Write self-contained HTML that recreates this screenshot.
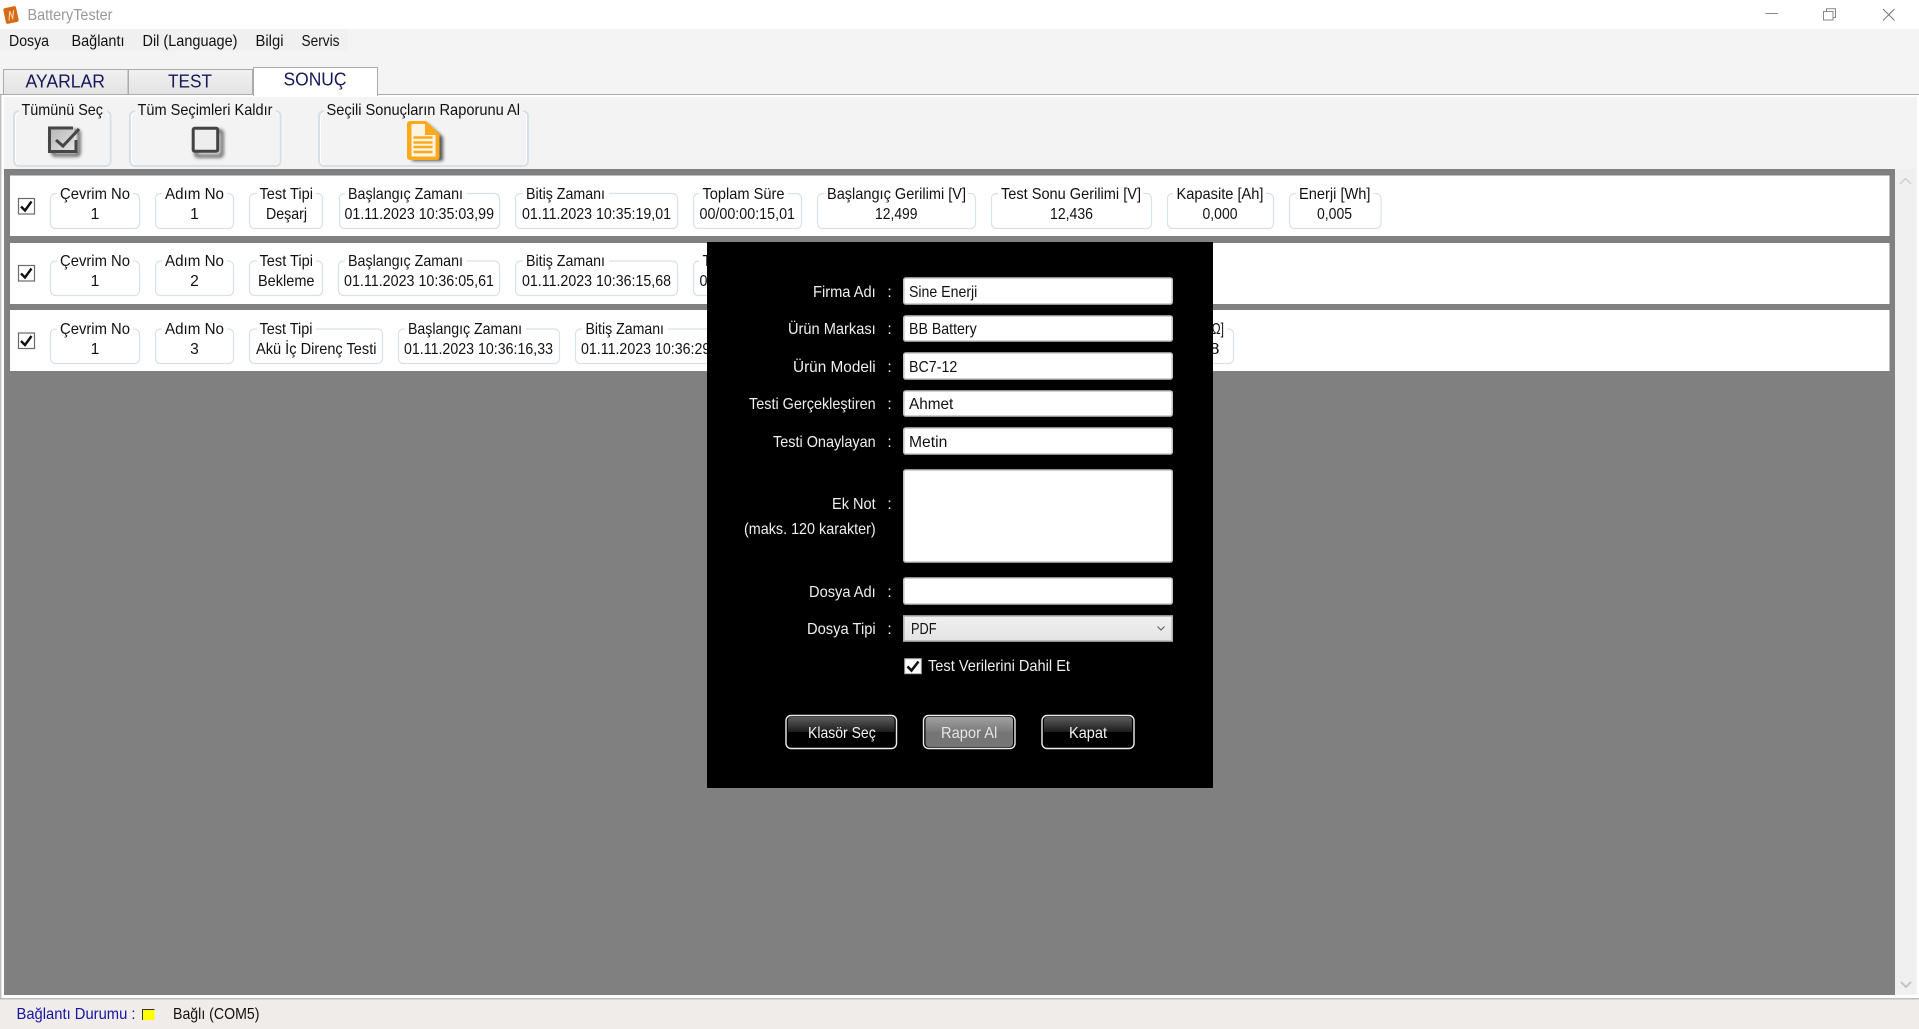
<!DOCTYPE html>
<html lang="tr"><head><meta charset="utf-8"><title>BatteryTester</title>
<style>
html,body{margin:0;padding:0;width:1919px;height:1029px;overflow:hidden;background:#fff}
svg{display:block}
text{font-family:"Liberation Sans",sans-serif;font-size:15.6px;fill:#111}
.d{fill:#f0f0f0}
.c{text-anchor:middle}
.g{fill:none;stroke:#d8e2e9;stroke-width:1.2}
.tab{font-size:18px;fill:#14185a}
.btn{fill:#f2f2f2}
</style></head><body>
<svg width="1919" height="1029" viewBox="0 0 1919 1029" xmlns="http://www.w3.org/2000/svg">
<defs>
<linearGradient id="tabg" x1="0" y1="0" x2="0" y2="1"><stop offset="0" stop-color="#f1f1f1"/><stop offset="1" stop-color="#e3e3e3"/></linearGradient>
<linearGradient id="btop" x1="0" y1="0" x2="0" y2="1"><stop offset="0" stop-color="#5c5c5c"/><stop offset="1" stop-color="#1c1c1c"/></linearGradient>
<linearGradient id="btopg" x1="0" y1="0" x2="0" y2="1"><stop offset="0" stop-color="#a0a0a0"/><stop offset="1" stop-color="#7a7a7a"/></linearGradient>
<linearGradient id="cmb" x1="0" y1="0" x2="0" y2="1"><stop offset="0" stop-color="#f0f0f0"/><stop offset="1" stop-color="#e4e4e4"/></linearGradient>
<linearGradient id="chk" x1="0" y1="0" x2="1" y2="1"><stop offset="0" stop-color="#b5b5b5"/><stop offset="1" stop-color="#e4e4e4"/></linearGradient>
<filter id="sh" x="-30%" y="-30%" width="170%" height="170%"><feGaussianBlur stdDeviation="1.5"/></filter>
</defs>

<!-- window chrome -->
<rect width="1919" height="1029" fill="#fff"/>
<rect y="29" width="1919" height="65" fill="#f4f4f4"/>
<rect y="29" width="348" height="22" fill="#f0f0f0"/>
<g transform="rotate(-12 11 15)"><rect x="4.5" y="7" width="13" height="16" rx="2" fill="#d96a14"/><path d="M8 20 L10.5 11 L12 18.5 L14.5 11" fill="none" stroke="#f7d5b8" stroke-width="1.1"/></g>
<text x="27.5" y="20" style="fill:#999" textLength="85" lengthAdjust="spacingAndGlyphs">BatteryTester</text>
<path d="M1765.5 13.5H1778" stroke="#888" stroke-width="1"/>
<path d="M1823.5 11.5H1833V20H1823.5ZM1826.5 11.5V8.8H1835.5V17.5H1833" fill="none" stroke="#888" stroke-width="1"/>
<path d="M1883 9L1894.5 20.5M1894.5 9L1883 20.5" stroke="#777" stroke-width="1"/>

<text x="9" y="46" textLength="40" lengthAdjust="spacingAndGlyphs">Dosya</text>
<text x="71.5" y="46" textLength="53" lengthAdjust="spacingAndGlyphs">Bağlantı</text>
<text x="142.5" y="46" textLength="95" lengthAdjust="spacingAndGlyphs">Dil (Language)</text>
<text x="255.5" y="46" textLength="28" lengthAdjust="spacingAndGlyphs">Bilgi</text>
<text x="301.5" y="46" textLength="38" lengthAdjust="spacingAndGlyphs">Servis</text>

<!-- tabs -->
<rect x="0" y="94" width="1919" height="1" fill="#ababab"/>
<rect x="3.5" y="69.5" width="124.5" height="25" fill="url(#tabg)" stroke="#ababab"/>
<rect x="128.5" y="69.5" width="124" height="25" fill="url(#tabg)" stroke="#ababab"/>
<rect x="253.5" y="67.5" width="124" height="28" fill="#fff" stroke="#ababab"/>
<rect x="254" y="94" width="123" height="3" fill="#fff"/>
<text class="tab" x="25.5" y="87.5" textLength="79.5" lengthAdjust="spacingAndGlyphs">AYARLAR</text>
<text class="tab" x="168" y="87.5" textLength="44" lengthAdjust="spacingAndGlyphs">TEST</text>
<text class="tab" x="283.5" y="85.5" textLength="63" lengthAdjust="spacingAndGlyphs">SONUÇ</text>

<!-- panel -->
<rect x="2" y="97" width="1915" height="901" fill="#f3f3f3"/>
<rect x="0" y="95" width="1.5" height="904" fill="#c0c0c0"/>

<!-- top groups -->
<g fill="none" stroke="#fff" stroke-width="1"><rect x="15.5" y="112.5" width="94" height="53" rx="5"/><rect x="131.5" y="112.5" width="148" height="53" rx="5"/><rect x="320.5" y="112.5" width="206" height="53" rx="5"/></g>
<g fill="none" stroke="#d6e0e6" stroke-width="2"><rect x="14" y="111" width="96.5" height="55" rx="5"/><rect x="130" y="111" width="150.5" height="55" rx="5"/><rect x="319" y="111" width="209" height="55" rx="5"/></g>
<g fill="#f3f3f3"><rect x="19" y="105" width="88" height="10"/><rect x="135" y="105" width="141" height="10"/><rect x="324" y="105" width="199" height="10"/></g>
<text x="21.5" y="115" textLength="81.5" lengthAdjust="spacingAndGlyphs">Tümünü Seç</text>
<text x="137.5" y="115" textLength="135" lengthAdjust="spacingAndGlyphs">Tüm Seçimleri Kaldır</text>
<text x="326.5" y="115" textLength="193.5" lengthAdjust="spacingAndGlyphs">Seçili Sonuçların Raporunu Al</text>

<!-- select all icon -->
<rect x="53" y="131" width="26" height="24" rx="2" fill="none" stroke="#666" stroke-width="3.5" filter="url(#sh)"/>
<rect x="49.5" y="128" width="25" height="24" fill="url(#chk)"/>
<path d="M76 140V151.5H49.5V128H73" fill="none" stroke="#464646" stroke-width="3"/>
<path d="M56 140L63 146L79 129" fill="none" stroke="#464646" stroke-width="3"/>
<!-- clear all icon -->
<rect x="196" y="131" width="26" height="25" rx="2" fill="none" stroke="#777" stroke-width="4" filter="url(#sh)"/>
<rect x="193.2" y="128.2" width="24.5" height="23" rx="1.5" fill="#eeeeee" stroke="#434343" stroke-width="3"/>
<!-- doc icon -->
<path d="M412 124H428L443 137V161H412Z" fill="#333" filter="url(#sh)" opacity=".8"/>
<path d="M410 121H426L439.5 134V157A3 3 0 0 1 436.5 160H410A3 3 0 0 1 407 157V124A3 3 0 0 1 410 121Z" fill="#fba91c"/>
<path d="M411.5 124H425V135H435.5V156.5H411.5Z" fill="#fdf3e2"/>
<path d="M413.5 137.5H432.5M413.5 142.5H432.5M413.5 147H432.5M413.5 152H432.5" stroke="#fba91c" stroke-width="2.4"/>

<!-- list -->
<rect x="4" y="169" width="1891" height="826" fill="#808080"/>
<rect x="2" y="995" width="1915" height="3" fill="#fff"/>
<rect x="2" y="97" width="2" height="898" fill="#fff"/>
<rect x="1895" y="169" width="21" height="825" fill="#f0f0f0"/>
<path d="M1900 184L1905.5 178.5L1911 184" fill="none" stroke="#cfcfcf" stroke-width="1.5"/>
<path d="M1901 982L1906 987L1911 982" fill="none" stroke="#c4c4c4" stroke-width="2"/>
<rect x="10" y="175.5" width="1879.5" height="60.5" fill="#fff"/>
<rect x="10" y="243" width="1879.5" height="61" fill="#fff"/>
<rect x="10" y="310" width="1879.5" height="61" fill="#fff"/>

<!-- group boxes row 1 -->
<g class="g">
<rect x="50.5" y="193.5" width="89" height="35" rx="5"/><rect x="155.5" y="193.5" width="78" height="35" rx="5"/><rect x="249.5" y="193.5" width="73" height="35" rx="5"/><rect x="339.5" y="193.5" width="160" height="35" rx="5"/><rect x="515.5" y="193.5" width="162" height="35" rx="5"/><rect x="693.5" y="193.5" width="108" height="35" rx="5"/><rect x="817.5" y="193.5" width="158" height="35" rx="5"/><rect x="991.5" y="193.5" width="160" height="35" rx="5"/><rect x="1167.5" y="193.5" width="106" height="35" rx="5"/><rect x="1289.5" y="193.5" width="91.5" height="35" rx="5"/>
</g>
<g fill="#fff"><rect x="57" y="190" width="76" height="7"/><rect x="162" y="190" width="65" height="7"/><rect x="257" y="190" width="59" height="7"/><rect x="345" y="190" width="122" height="7"/><rect x="523" y="190" width="86" height="7"/><rect x="699" y="190" width="89" height="7"/><rect x="824" y="190" width="144" height="7"/><rect x="998" y="190" width="145" height="7"/><rect x="1173" y="190" width="93" height="7"/><rect x="1296" y="190" width="77" height="7"/></g>
<text x="60" y="199" textLength="70" lengthAdjust="spacingAndGlyphs">Çevrim No</text><text class="c" x="95" y="219">1</text>
<text x="165" y="199" textLength="59" lengthAdjust="spacingAndGlyphs">Adım No</text><text class="c" x="194.5" y="219">1</text>
<text x="259.5" y="199" textLength="53.5" lengthAdjust="spacingAndGlyphs">Test Tipi</text><text x="266" y="219" textLength="41" lengthAdjust="spacingAndGlyphs">Deşarj</text>
<text x="348" y="199" textLength="115" lengthAdjust="spacingAndGlyphs">Başlangıç Zamanı</text><text x="344.5" y="219" textLength="149.5" lengthAdjust="spacingAndGlyphs">01.11.2023 10:35:03,99</text>
<text x="526" y="199" textLength="79" lengthAdjust="spacingAndGlyphs">Bitiş Zamanı</text><text x="522" y="219" textLength="149" lengthAdjust="spacingAndGlyphs">01.11.2023 10:35:19,01</text>
<text x="702.5" y="199" textLength="82" lengthAdjust="spacingAndGlyphs">Toplam Süre</text><text x="699.5" y="219" textLength="95.5" lengthAdjust="spacingAndGlyphs">00/00:00:15,01</text>
<text x="827" y="199" textLength="139" lengthAdjust="spacingAndGlyphs">Başlangıç Gerilimi [V]</text><text x="875" y="219" textLength="42.5" lengthAdjust="spacingAndGlyphs">12,499</text>
<text x="1001" y="199" textLength="140" lengthAdjust="spacingAndGlyphs">Test Sonu Gerilimi [V]</text><text x="1050" y="219" textLength="43" lengthAdjust="spacingAndGlyphs">12,436</text>
<text x="1176.5" y="199" textLength="87" lengthAdjust="spacingAndGlyphs">Kapasite [Ah]</text><text x="1202.5" y="219" textLength="35" lengthAdjust="spacingAndGlyphs">0,000</text>
<text x="1299" y="199" textLength="71.5" lengthAdjust="spacingAndGlyphs">Enerji [Wh]</text><text x="1317" y="219" textLength="35" lengthAdjust="spacingAndGlyphs">0,005</text>

<!-- row 2 -->
<g class="g">
<rect x="50.5" y="261" width="89" height="34.5" rx="5"/><rect x="155.5" y="261" width="78" height="34.5" rx="5"/><rect x="249.5" y="261" width="73" height="34.5" rx="5"/><rect x="338.5" y="261" width="161" height="34.5" rx="5"/><rect x="515.5" y="261" width="162" height="34.5" rx="5"/><rect x="693.5" y="261" width="60" height="34.5" rx="5"/>
</g>
<g fill="#fff"><rect x="57" y="257" width="76" height="7"/><rect x="162" y="257" width="65" height="7"/><rect x="257" y="257" width="59" height="7"/><rect x="345" y="257" width="122" height="7"/><rect x="523" y="257" width="86" height="7"/><rect x="699" y="257" width="20" height="7"/></g>
<text x="60" y="266" textLength="70" lengthAdjust="spacingAndGlyphs">Çevrim No</text><text class="c" x="95" y="286">1</text>
<text x="165" y="266" textLength="59" lengthAdjust="spacingAndGlyphs">Adım No</text><text class="c" x="194.5" y="286">2</text>
<text x="259.5" y="266" textLength="53.5" lengthAdjust="spacingAndGlyphs">Test Tipi</text><text x="258" y="286" textLength="56.5" lengthAdjust="spacingAndGlyphs">Bekleme</text>
<text x="348" y="266" textLength="115" lengthAdjust="spacingAndGlyphs">Başlangıç Zamanı</text><text x="344" y="286" textLength="150" lengthAdjust="spacingAndGlyphs">01.11.2023 10:36:05,61</text>
<text x="526" y="266" textLength="79" lengthAdjust="spacingAndGlyphs">Bitiş Zamanı</text><text x="522" y="286" textLength="149" lengthAdjust="spacingAndGlyphs">01.11.2023 10:36:15,68</text>
<text x="702.5" y="266" textLength="82" lengthAdjust="spacingAndGlyphs">Toplam Süre</text><text x="699.5" y="286" textLength="95.5" lengthAdjust="spacingAndGlyphs">00/00:00:10,07</text>

<!-- row 3 -->
<g class="g">
<rect x="50.5" y="329" width="89" height="34.5" rx="5"/><rect x="155.5" y="329" width="78" height="34.5" rx="5"/><rect x="249.5" y="329" width="133" height="34.5" rx="5"/><rect x="398.5" y="329" width="161" height="34.5" rx="5"/><rect x="575.5" y="329" width="162" height="34.5" rx="5"/><rect x="1150" y="329" width="83.5" height="34.5" rx="5"/>
</g>
<g fill="#fff"><rect x="57" y="325" width="76" height="7"/><rect x="162" y="325" width="65" height="7"/><rect x="257" y="325" width="59" height="7"/><rect x="405" y="325" width="121" height="7"/><rect x="582" y="325" width="86" height="7"/><rect x="1155" y="325" width="72" height="7"/></g>
<text x="60" y="334" textLength="70" lengthAdjust="spacingAndGlyphs">Çevrim No</text><text class="c" x="95" y="354">1</text>
<text x="165" y="334" textLength="59" lengthAdjust="spacingAndGlyphs">Adım No</text><text class="c" x="194.5" y="354">3</text>
<text x="259.5" y="334" textLength="53" lengthAdjust="spacingAndGlyphs">Test Tipi</text><text x="256" y="354" textLength="120.5" lengthAdjust="spacingAndGlyphs">Akü İç Direnç Testi</text>
<text x="408" y="334" textLength="114" lengthAdjust="spacingAndGlyphs">Başlangıç Zamanı</text><text x="404" y="354" textLength="149" lengthAdjust="spacingAndGlyphs">01.11.2023 10:36:16,33</text>
<text x="585.5" y="334" textLength="78.5" lengthAdjust="spacingAndGlyphs">Bitiş Zamanı</text><text x="581" y="354" textLength="149" lengthAdjust="spacingAndGlyphs">01.11.2023 10:36:29,40</text>
<text x="1160" y="334" textLength="64" lengthAdjust="spacingAndGlyphs">Direnç [mΩ]</text><text x="1200" y="354" textLength="19.5" lengthAdjust="spacingAndGlyphs">18</text>

<!-- row checkboxes -->
<g fill="#fff" stroke="#6a6a6a" stroke-width="1.2"><rect x="18.5" y="198.5" width="16" height="15.5"/><rect x="18.5" y="265.5" width="16" height="15.5"/><rect x="18.5" y="333" width="16" height="15.5"/></g>
<g fill="none" stroke="#111" stroke-width="2.4"><path d="M21 206.5L25 210.5L31.5 201.5"/><path d="M21 273.5L25 277.5L31.5 268.5"/><path d="M21 341L25 345L31.5 336"/></g>

<!-- status -->
<rect x="0" y="998" width="1919" height="1.5" fill="#bdbdbd"/>
<rect x="0" y="999.5" width="1919" height="30" fill="#f0ecea"/>
<text x="16.5" y="1019" style="fill:#1414a0" textLength="119" lengthAdjust="spacingAndGlyphs">Bağlantı Durumu :</text>
<rect x="142" y="1009" width="12.5" height="11" fill="#ffff00"/>
<path d="M142.5 1020V1009.5H154.5" fill="none" stroke="#333" stroke-width="1"/>
<text x="173" y="1019" textLength="86.5" lengthAdjust="spacingAndGlyphs">Bağlı (COM5)</text>

<!-- dialog -->
<rect x="707" y="242" width="506" height="546" fill="#000"/>
<g fill="#fff" stroke="#c4c4c4" stroke-width="1.6">
<rect x="903.8" y="278" width="268.4" height="26" rx="2"/>
<rect x="903.8" y="316" width="268.4" height="25" rx="2"/>
<rect x="903.8" y="353" width="268.4" height="26" rx="2"/>
<rect x="903.8" y="391" width="268.4" height="25" rx="2"/>
<rect x="903.8" y="428" width="268.4" height="26" rx="2"/>
<rect x="903.8" y="470" width="268.4" height="92" rx="2"/>
<rect x="903.8" y="578" width="268.4" height="26" rx="2"/>
</g>
<rect x="903.8" y="616" width="268.4" height="25" fill="url(#cmb)" stroke="#b4b4b4" stroke-width="1.6"/>
<path d="M1157.5 626.5L1161 630L1164.5 626.5" fill="none" stroke="#666" stroke-width="1.2"/>

<text class="d" x="813" y="297" textLength="62.7" lengthAdjust="spacingAndGlyphs">Firma Adı</text>
<text class="d" x="788" y="334" textLength="87.7" lengthAdjust="spacingAndGlyphs">Ürün Markası</text>
<text class="d" x="793" y="372" textLength="82.7" lengthAdjust="spacingAndGlyphs">Ürün Modeli</text>
<text class="d" x="749" y="409" textLength="126.7" lengthAdjust="spacingAndGlyphs">Testi Gerçekleştiren</text>
<text class="d" x="773" y="447" textLength="102.7" lengthAdjust="spacingAndGlyphs">Testi Onaylayan</text>
<text class="d" x="832" y="509" textLength="43.7" lengthAdjust="spacingAndGlyphs">Ek Not</text>
<text class="d" x="744" y="534" textLength="131.7" lengthAdjust="spacingAndGlyphs">(maks. 120 karakter)</text>
<text class="d" x="809" y="597" textLength="66.7" lengthAdjust="spacingAndGlyphs">Dosya Adı</text>
<text class="d" x="807" y="634" textLength="68.7" lengthAdjust="spacingAndGlyphs">Dosya Tipi</text>
<g><text class="d c" x="889.5" y="297">:</text><text class="d c" x="889.5" y="334">:</text><text class="d c" x="889.5" y="372">:</text><text class="d c" x="889.5" y="409">:</text><text class="d c" x="889.5" y="447">:</text><text class="d c" x="889.5" y="509">:</text><text class="d c" x="889.5" y="597">:</text><text class="d c" x="889.5" y="634">:</text></g>

<text x="909" y="297" textLength="68.3" lengthAdjust="spacingAndGlyphs">Sine Enerji</text>
<text x="909" y="334" textLength="67.7" lengthAdjust="spacingAndGlyphs">BB Battery</text>
<text x="909" y="372" textLength="48.3" lengthAdjust="spacingAndGlyphs">BC7-12</text>
<text x="909" y="409" textLength="44.3" lengthAdjust="spacingAndGlyphs">Ahmet</text>
<text x="909" y="447" textLength="38.3" lengthAdjust="spacingAndGlyphs">Metin</text>
<text x="911" y="634" textLength="25.5" lengthAdjust="spacingAndGlyphs">PDF</text>

<rect x="904.7" y="658.7" width="16.6" height="15" fill="#fff" stroke="#aaa" stroke-width="1"/>
<path d="M907.5 666.5L911.5 670.5L918.5 661.5" fill="none" stroke="#111" stroke-width="2.6"/>
<text class="d" x="928" y="671" textLength="142" lengthAdjust="spacingAndGlyphs">Test Verilerini Dahil Et</text>

<!-- buttons -->
<g>
<rect x="786" y="715.5" width="110.5" height="33" rx="5" fill="#000" stroke="#eee" stroke-width="1.4"/>
<path d="M788 732V720A3 3 0 0 1 791 717H891.5A3 3 0 0 1 894.5 720V732Z" fill="url(#btop)"/>
<rect x="923.5" y="715.5" width="91.5" height="33" rx="5" fill="#000" stroke="#eee" stroke-width="1.4"/>
<rect x="925.5" y="717" width="87.5" height="30" rx="3.5" fill="#757575"/>
<path d="M925.5 732V720A3 3 0 0 1 928.5 717H1010A3 3 0 0 1 1013 720V732Z" fill="url(#btopg)"/>
<rect x="1042" y="715.5" width="92" height="33" rx="5" fill="#000" stroke="#eee" stroke-width="1.4"/>
<path d="M1044 732V720A3 3 0 0 1 1047 717H1129A3 3 0 0 1 1132 720V732Z" fill="url(#btop)"/>
</g>
<text class="btn" x="808" y="738" textLength="67.7" lengthAdjust="spacingAndGlyphs">Klasör Seç</text>
<text x="941" y="738" style="fill:#e6e6e6" textLength="56.3" lengthAdjust="spacingAndGlyphs">Rapor Al</text>
<text class="btn" x="1069" y="738" textLength="38" lengthAdjust="spacingAndGlyphs">Kapat</text>
</svg>
</body></html>
